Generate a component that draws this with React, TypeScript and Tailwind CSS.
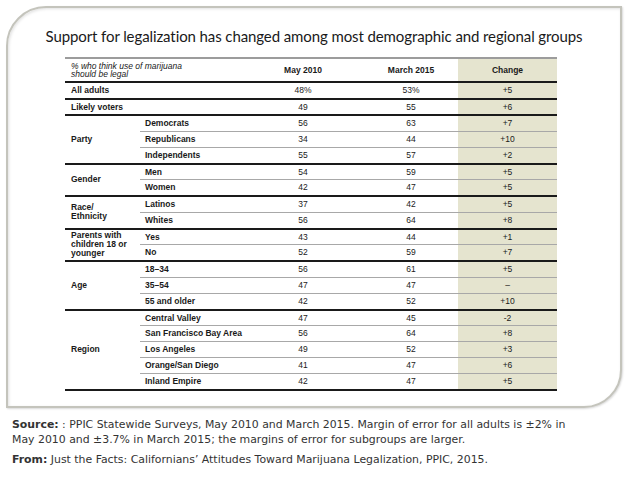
import React from "react";

type Row = [string | null, string, string, string];
const groups: { label: React.ReactNode; rows: Row[] }[] = [
  { label: "All adults", rows: [[null, "48%", "53%", "+5"]] },
  { label: "Likely voters", rows: [[null, "49", "55", "+6"]] },
  {
    label: "Party",
    rows: [
      ["Democrats", "56", "63", "+7"],
      ["Republicans", "34", "44", "+10"],
      ["Independents", "55", "57", "+2"],
    ],
  },
  {
    label: "Gender",
    rows: [
      ["Men", "54", "59", "+5"],
      ["Women", "42", "47", "+5"],
    ],
  },
  {
    label: (
      <>
        Race/
        <br />
        Ethnicity
      </>
    ),
    rows: [
      ["Latinos", "37", "42", "+5"],
      ["Whites", "56", "64", "+8"],
    ],
  },
  {
    label: (
      <>
        Parents with
        <br />
        children 18 or
        <br />
        younger
      </>
    ),
    rows: [
      ["Yes", "43", "44", "+1"],
      ["No", "52", "59", "+7"],
    ],
  },
  {
    label: "Age",
    rows: [
      ["18–34", "56", "61", "+5"],
      ["35–54", "47", "47", "–"],
      ["55 and older", "42", "52", "+10"],
    ],
  },
  {
    label: "Region",
    rows: [
      ["Central Valley", "47", "45", "-2"],
      ["San Francisco Bay Area", "56", "64", "+8"],
      ["Los Angeles", "49", "52", "+3"],
      ["Orange/San Diego", "41", "47", "+6"],
      ["Inland Empire", "42", "47", "+5"],
    ],
  },
];

export default function App() {
  return (
    <div className="w-[628px] h-[503px] bg-white overflow-hidden relative">
      <div className="ml-[6px] mt-[6px] w-[616px] h-[402px] bg-white border-2 border-[#c4c4bc] rounded-tl-[40px] rounded-br-[38px] shadow-[inset_1px_1px_3px_rgba(0,0,0,0.12),1px_1px_2px_rgba(0,0,0,0.15)]">
        <div
          className="pt-[18px] text-center text-[15px] leading-[20px] tracking-[-0.1px] text-[#1a1a1a]"
          style={{ fontFamily: "Lato, 'Open Sans', sans-serif" }}
        >
          Support for legalization has changed among most demographic and regional groups
        </div>
        <table
          className="mt-[11px] ml-[57px] w-[492px] border-collapse table-fixed text-[8.5px] text-[#1a1a1a]"
          style={{ fontFamily: "'Liberation Sans', Arial, sans-serif" }}
        >
          <colgroup>
            <col className="w-[75px]" />
            <col className="w-[102px]" />
            <col className="w-[122px]" />
            <col className="w-[94px]" />
            <col className="w-[99px]" />
          </colgroup>
          <thead>
            <tr className="h-[24px] border-t-2 border-t-[#9c9c9c] border-b-2 border-b-[#1a1a1a]">
              <th colSpan={2} className="text-left font-normal italic pl-[6px] leading-[8.5px] text-[8.5px] align-middle">
                % who think use of marijuana
                <br />
                should be legal
              </th>
              <th className="font-bold text-center">May 2010</th>
              <th className="font-bold text-center">March 2015</th>
              <th className="font-bold text-center bg-[#e5e4cf]">Change</th>
            </tr>
          </thead>
          <tbody>
            {groups.map((g, gi) =>
              g.rows.map((r, ri) => {
                const last = ri === g.rows.length - 1;
                const b = last
                  ? "border-b-2 border-b-[#1a1a1a]"
                  : "border-b border-b-[#a8a8a8]";
                return (
                  <tr key={`${gi}-${ri}`} className={last ? "h-[16.5px]" : "h-[16px]"}>
                    {ri === 0 && r[0] === null && (
                      <td colSpan={2} className={`pl-[6px] font-bold leading-none ${b}`}>
                        {g.label}
                      </td>
                    )}
                    {ri === 0 && r[0] !== null && (
                      <td
                        rowSpan={g.rows.length}
                        className="pl-[6px] font-bold leading-[9px] align-middle border-b-2 border-b-[#1a1a1a]"
                      >
                        {g.label}
                      </td>
                    )}
                    {r[0] !== null && (
                      <td className={`pl-[5px] font-bold leading-none ${b}`}>{r[0]}</td>
                    )}
                    <td className={`text-center leading-none ${b}`}>{r[1]}</td>
                    <td className={`text-center leading-none ${b}`}>{r[2]}</td>
                    <td className={`text-center leading-none bg-[#e5e4cf] ${b}`}>{r[3]}</td>
                  </tr>
                );
              })
            )}
          </tbody>
        </table>
      </div>
      <div
        className="ml-[12px] mt-[9px] w-[610px] text-[10.9px] leading-[15px] text-[#333]"
        style={{ fontFamily: "'DejaVu Sans', Verdana, sans-serif" }}
      >
        <p>
          <span className="font-bold">Source:</span> : PPIC Statewide Surveys, May 2010 and March 2015. Margin of error for all adults is ±2% in
          <br />
          May 2010 and ±3.7% in March 2015; the margins of error for subgroups are larger.
        </p>
        <p className="mt-[5px]">
          <span className="font-bold">From:</span> Just the Facts: Californians’ Attitudes Toward Marijuana Legalization, PPIC, 2015.
        </p>
      </div>
    </div>
  );
}
